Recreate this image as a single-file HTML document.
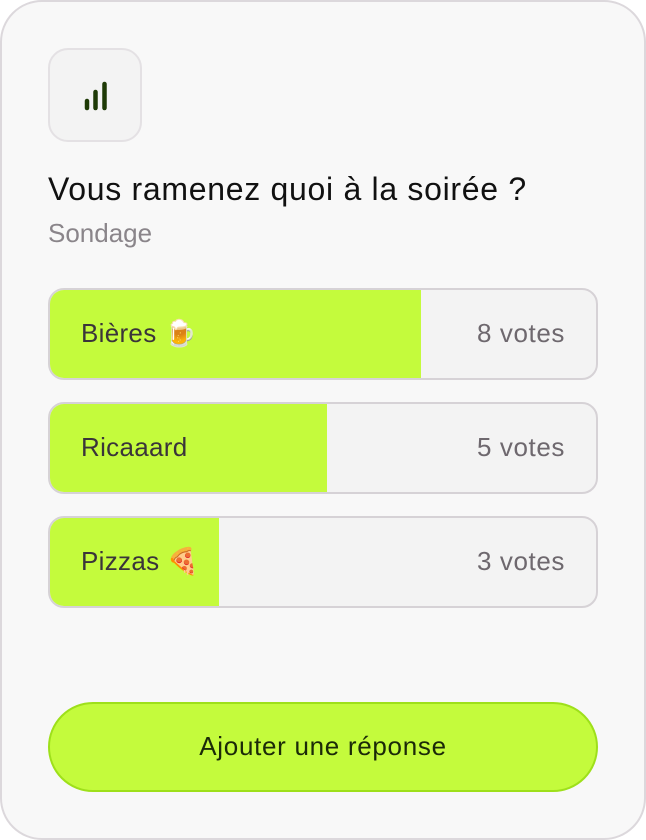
<!DOCTYPE html>
<html><head><meta charset="utf-8"><style>
*{box-sizing:border-box;margin:0;padding:0}
body{width:646px;height:840px;background:#fff;font-family:"Liberation Sans","DejaVu Sans",sans-serif;overflow:hidden;position:relative}
.card{position:absolute;left:0;top:0;width:646px;height:840px;background:#f8f8f8;border:2px solid #dcd8dc;border-radius:42px}
.ic{position:absolute;left:48px;top:48px;width:94px;height:94px;border:2px solid #e4e1e4;border-radius:20px;background:#f3f3f3}
h1{position:absolute;left:48px;top:171px;font-size:32px;font-weight:400;color:#111;letter-spacing:0.7px;white-space:nowrap}
.sub{position:absolute;left:48px;top:218px;font-size:26px;color:#8a858a}
.opt{position:absolute;left:48px;width:550px;height:92px;border:2px solid #d6d2d6;border-radius:16px;background:#f3f3f3;overflow:hidden}
.fill{position:absolute;left:0;top:0;bottom:0;background:#c4fb3c}
.lab{position:absolute;left:31px;top:0;line-height:86px;font-size:26px;color:#3a343a;letter-spacing:0.3px}
.v{position:absolute;right:31px;top:0;line-height:86px;font-size:26px;color:#6e686e;letter-spacing:0.6px}
.btn{position:absolute;left:48px;top:702px;width:550px;height:90px;border:2px solid #9ee01a;border-radius:45px;background:#c4fb3c;text-align:center;line-height:84px;font-size:26px;color:#1b2a08;letter-spacing:0.7px}
</style></head><body>
<div class="card"></div>
<div class="ic"></div>
<svg width="200" height="200" style="position:absolute;left:0;top:0"><g stroke="#1e3a06" stroke-width="4.5" stroke-linecap="round"><line x1="87" y1="101" x2="87" y2="108"/><line x1="95.5" y1="92" x2="95.5" y2="108"/><line x1="104.5" y1="84" x2="104.5" y2="108"/></g></svg>
<h1>Vous ramenez quoi à la soirée ?</h1>
<div class="sub">Sondage</div>
<div class="opt" style="top:288px"><div class="fill" style="width:371px"></div><div class="lab">Bières 🍺</div><div class="v">8 votes</div></div>
<div class="opt" style="top:402px"><div class="fill" style="width:277px"></div><div class="lab">Ricaaard</div><div class="v">5 votes</div></div>
<div class="opt" style="top:516px"><div class="fill" style="width:169px"></div><div class="lab">Pizzas 🍕</div><div class="v">3 votes</div></div>
<div class="btn">Ajouter une réponse</div>
</body></html>
